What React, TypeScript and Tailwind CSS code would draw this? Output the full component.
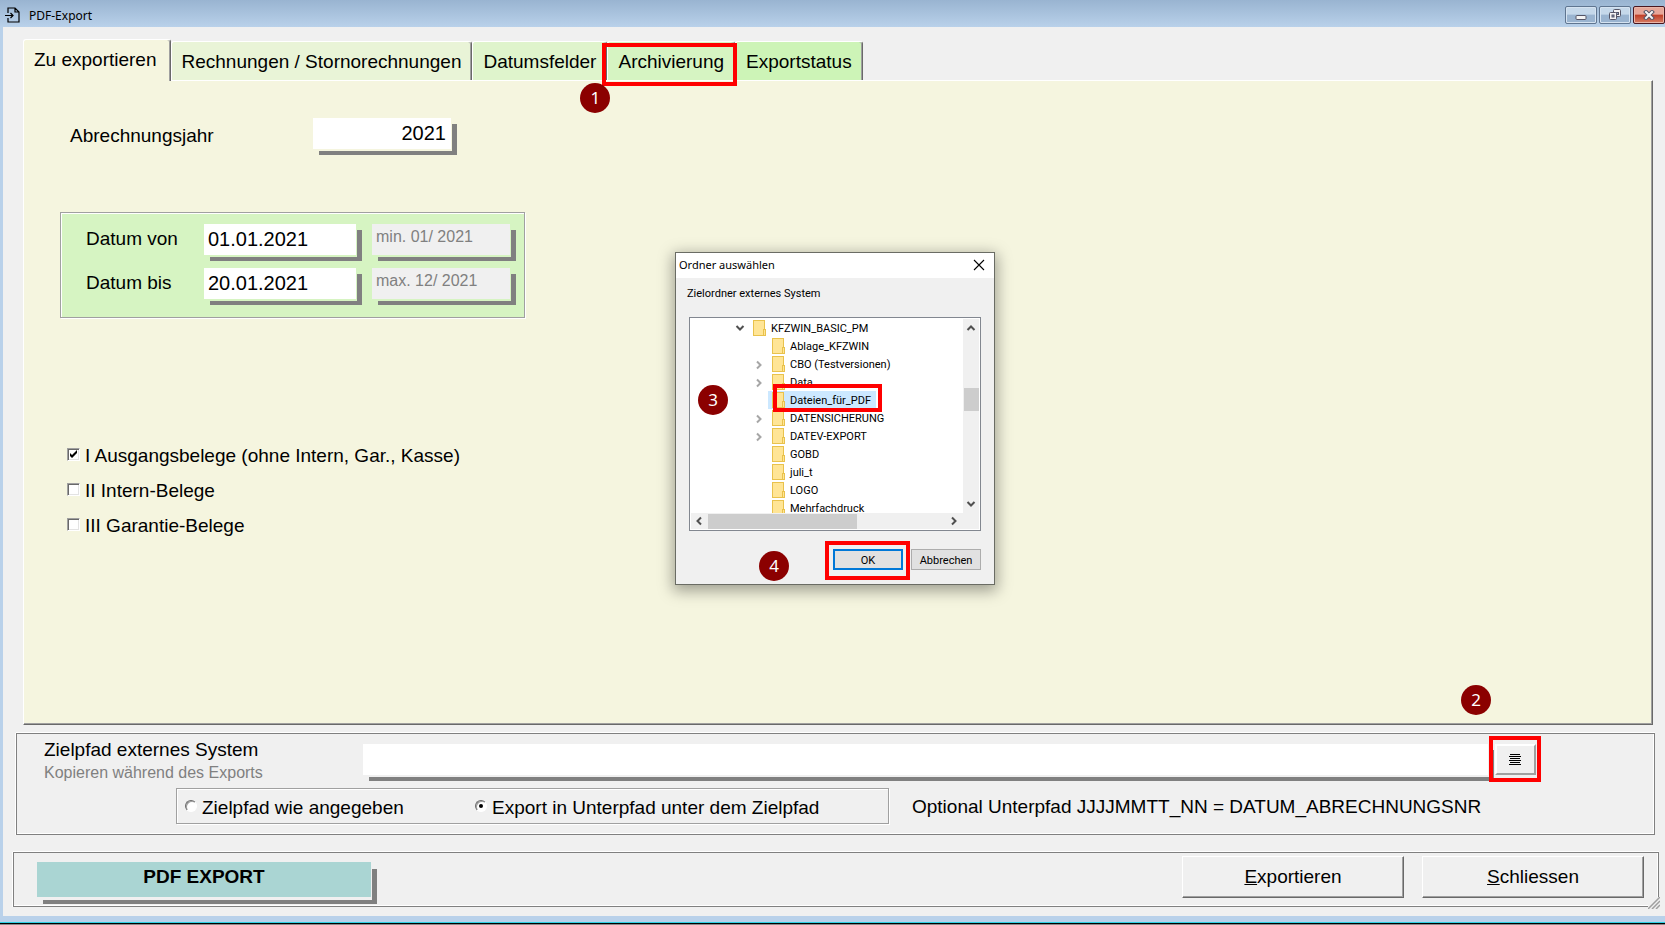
import React, { useState } from 'react';

type Tab = { name: string; color: string; marked?: boolean };

const tabs: Tab[] = [
  { name: 'Zu exportieren', color: 'bg-[#f5f5df]' },
  { name: 'Rechnungen / Stornorechnungen', color: 'bg-[#e9f4d7]' },
  { name: 'Datumsfelder', color: 'bg-[#dff4cc]' },
  { name: 'Archivierung', color: 'bg-[#d6f4c2]', marked: true },
  { name: 'Exportstatus', color: 'bg-[#cdf4b7]' },
];

const folders = [
  { name: 'Ablage_KFZWIN' },
  { name: 'CBO (Testversionen)', expandable: true },
  { name: 'Data', expandable: true },
  { name: 'Dateien_für_PDF' },
  { name: 'DATENSICHERUNG', expandable: true },
  { name: 'DATEV-EXPORT', expandable: true },
  { name: 'GOBD' },
  { name: 'juli_t' },
  { name: 'LOGO' },
  { name: 'Mehrfachdruck' },
];

const Badge: React.FC<{ n: number; className: string }> = ({ n, className }) => (
  <span
    className={`absolute z-20 flex size-[30px] items-center justify-center rounded-full bg-[#8b0000] pb-[2px] font-['Noto_Sans',sans-serif] text-[17px] leading-none text-white ${className}`}
  >
    {n}
  </span>
);

const Marker: React.FC<{ className: string }> = ({ className }) => (
  <span className={`pointer-events-none absolute z-10 border-4 border-[#ff0000] ${className}`} />
);

const Chevron: React.FC<{ d: string; color?: string }> = ({ d, color = '#505050' }) => (
  <svg width="10" height="10" viewBox="0 0 10 10" fill="none" stroke={color} strokeWidth="2">
    <path d={d} />
  </svg>
);

const UP = 'M1.500 7L5 3.500 8.500 7';
const DOWN = 'M1.500 3L5 6.500 8.500 3';
const LEFT = 'M7 1.500L3.500 5 7 8.500';
const RIGHT = 'M3 1.500L6.500 5 3 8.500';

const Folder: React.FC = () => (
  <svg width="13" height="16" viewBox="0 0 13 16" className="shrink-0">
    <rect x="0.5" y="0.5" width="11" height="15" fill="#ffe596" stroke="#e9c24c" />
    <rect x="10.5" y="9.5" width="2" height="6" fill="#ffe596" stroke="#e9c24c" />
  </svg>
);

const WindowButtons: React.FC = () => (
  <div className="flex gap-[2px] self-start pt-[6px]">
    <button
      aria-label="Minimieren"
      className="flex h-[18px] w-8 items-center justify-center rounded-[2px] border border-[#5f7590] bg-linear-to-b from-[#c5d8ea] from-45% to-[#9ab4d0] to-50% shadow-[inset_0_0_0_1px_#d5e3f1]"
    >
      <svg width="12" height="12" viewBox="0 0 12 12">
        <rect x="1" y="6.5" width="10" height="4" rx="1" fill="#f4f4f4" stroke="#555566" />
      </svg>
    </button>
    <button
      aria-label="Wiederherstellen"
      className="flex h-[18px] w-8 items-center justify-center rounded-[2px] border border-[#5f7590] bg-linear-to-b from-[#c5d8ea] from-45% to-[#9ab4d0] to-50% shadow-[inset_0_0_0_1px_#d5e3f1]"
    >
      <svg width="14" height="14" viewBox="0 0 14 14" fill="#f4f4f4" stroke="#555566">
        <rect x="5.5" y="1.5" width="7" height="7" rx="1" />
        <rect x="8.5" y="4.5" width="2" height="2" fill="#8ba8c4" />
        <rect x="1.5" y="4.5" width="7" height="7" rx="1" />
        <rect x="4" y="7" width="2" height="2" fill="#8ba8c4" />
      </svg>
    </button>
    <button
      aria-label="Schließen"
      className="flex h-[18px] w-8 items-center justify-center rounded-[2px] border border-[#4a1620] bg-linear-to-b from-[#e6a699] from-45% via-[#bf3d26] via-50% to-[#d67c64] shadow-[inset_0_0_0_1px_#eab5a8]"
    >
      <svg width="12" height="10" viewBox="0 0 12 10" fill="none" strokeLinecap="square">
        <path d="M3 2l6 6M9 2L3 8" stroke="#555566" strokeWidth="4" />
        <path d="M3 2l6 6M9 2L3 8" stroke="#f6f6f6" strokeWidth="2" />
      </svg>
    </button>
  </div>
);

const CheckRow: React.FC<{ label: string; checked?: boolean }> = ({ label, checked }) => (
  <label className="flex items-center gap-[5px]">
    <span className="relative mb-[3px] flex size-[13px]">
      <input
        type="checkbox"
        defaultChecked={checked}
        className="peer size-[13px] appearance-none border border-t-[#a0a0a0] border-r-white border-b-white border-l-[#a0a0a0] bg-white shadow-[inset_1px_1px_0_#696969,inset_-1px_-1px_0_#e3e3e3]"
      />
      <svg viewBox="0 0 13 13" className="pointer-events-none absolute inset-0 hidden peer-checked:block">
        <path d="M3 5v3l2 2 5-5V2L5 7z" fill="#000" />
      </svg>
    </span>
    {label}
  </label>
);

const RadioRow: React.FC<{ label: string; checked?: boolean }> = ({ label, checked }) => (
  <label className="flex items-center gap-[5px]">
    <span className="relative mb-[3px] flex size-3">
      <input
        type="radio"
        name="zielpfad"
        defaultChecked={checked}
        className="peer size-3 appearance-none rounded-full border border-t-[#696969] border-r-white border-b-white border-l-[#696969] bg-white shadow-[inset_1px_1px_0_#a0a0a0]"
      />
      <span className="pointer-events-none absolute top-1 left-1 hidden size-1 rounded-full bg-black peer-checked:block" />
    </span>
    {label}
  </label>
);

const DateRow: React.FC<{ id: string; label: string; value: string; limit: string }> = ({ id, label, value, limit }) => (
  <div className="flex items-center">
    <label htmlFor={id} className="w-[118px] pb-[2px]">
      {label}
    </label>
    <input
      id={id}
      defaultValue={value}
      className="mr-4 h-[31px] w-[152px] bg-white px-1 text-[20px] shadow-[1px_2px_0_#d6f4c2,6px_6px_0_#808080] outline-none"
    />
    <input
      aria-label={`${label} Grenze`}
      defaultValue={limit}
      disabled
      className="h-[31px] w-[138px] bg-[#f0f0f0] px-1 pb-[5px] text-[16px] text-[#808080] shadow-[1px_2px_0_#d6f4c2,6px_6px_0_#808080]"
    />
  </div>
);

const FolderDialog: React.FC = () => {
  const [selected, setSelected] = useState('Dateien_für_PDF');

  return (
    <div
      role="dialog"
      aria-label="Ordner auswählen"
      className="absolute top-[252px] left-[675px] w-80 border border-[#6a6c64] bg-[#f0f0f0] font-[Roboto,sans-serif] text-[11px] shadow-[0_4px_14px_2px_rgba(0,0,0,0.35)]"
    >
      <div className="flex h-[25px] items-center justify-between bg-white pr-[9px] pl-[3px]">
        <span className="pb-[2px] font-['Noto_Sans',sans-serif]">Ordner auswählen</span>
        <button aria-label="Dialog schließen" className="pb-[2px]">
          <svg width="12" height="12" viewBox="0 0 12 12" stroke="#000" strokeWidth="1.1">
            <path d="M1 1l10 10M11 1L1 11" />
          </svg>
        </button>
      </div>
      <p className="pt-2 pl-[11px] leading-4">Zielordner externes System</p>

      {/* Folder tree with its scroll bars */}
      <div className="mx-[13px] mt-[15px] grid h-[214px] grid-cols-[1fr_16px] grid-rows-[1fr_16px] border border-[#828790] bg-white p-px">
        <ul className="min-h-0 overflow-hidden leading-4">
          <li className="flex h-[18px] items-center">
            <span className="mr-2 ml-[44px]">
              <Chevron d={DOWN} />
            </span>
            <Folder />
            <span className="ml-[5px] pt-[2px]">KFZWIN_BASIC_PM</span>
          </li>
          {folders.map((folder) => (
            <li key={folder.name} className="flex h-[18px] items-center">
              <span className="ml-[63px] w-[14px] pt-[2px]">
                {folder.expandable && <Chevron d={RIGHT} color="#a6a6a6" />}
              </span>
              <button
                onClick={() => setSelected(folder.name)}
                className={`relative flex h-[18px] items-center pr-[5px] pl-1 ${folder.name === selected ? 'bg-[#cce8ff]' : ''}`}
              >
                <Folder />
                <span className="ml-[5px] pt-[2px]">{folder.name}</span>
                {folder.name === selected && <Marker className="-top-[7px] -right-[6px] -bottom-[3px] left-[5px]" />}
              </button>
            </li>
          ))}
        </ul>
        <div className="flex flex-col items-center justify-between bg-[#f0f0f0] py-1">
          <Chevron d={UP} />
          <span className="mb-[34px] h-[23px] w-[15px] bg-[#cdcdcd]" />
          <Chevron d={DOWN} />
        </div>
        <div className="flex items-center bg-[#f0f0f0] pr-1 pl-[3px]">
          <Chevron d={LEFT} />
          <span className="mr-auto ml-1 h-[15px] w-[149px] bg-[#cdcdcd]" />
          <Chevron d={RIGHT} />
        </div>
        <div className="bg-[#f0f0f0]" />
      </div>

      <div className="flex justify-end gap-2 px-[13px] pt-[18px] pb-[14px]">
        <div className="relative">
          <button className="block h-[21px] w-[70px] border-2 border-[#0078d7] bg-[#e1e1e1] pt-px leading-none">OK</button>
          <Marker className="-top-2 -right-[7px] -bottom-[10px] -left-2" />
          <Badge n={4} className="top-[2px] right-[114px]" />
        </div>
        <button className="h-[21px] w-[70px] border border-[#adadad] bg-[#e1e1e1] pt-px leading-none">Abbrechen</button>
      </div>
      <Badge n={3} className="top-[132px] left-[22px]" />
    </div>
  );
};

const App: React.FC = () => {
  const [active, setActive] = useState('Zu exportieren');

  return (
    <div className="relative flex min-h-screen flex-col bg-[#f0f0f0] font-['Liberation_Sans',Arial,sans-serif] text-[19px] leading-6 text-black">
      {/* Title bar */}
      <header className="flex h-[27px] items-center bg-linear-to-b from-[#99b4d1] to-[#b9d1ea] pl-[5px] font-['Noto_Sans',sans-serif] text-[12px]">
        <svg width="16" height="16" viewBox="0 0 16 16" fill="none" stroke="#000" strokeWidth="1.2" className="mt-[3px] mr-2">
          <path d="M3 6V1h7l4 4v10H3v-4M10 1v4h4M0 8.500h8M5.500 6L8 8.500 5.500 11" />
        </svg>
        <h1 className="mr-auto pt-1">PDF-Export</h1>
        <WindowButtons />
      </header>

      <main className="flex flex-1 flex-col border-l-[3px] border-[#b9d1ea] pt-3">
        {/* Tabs */}
        <div role="tablist" className="ml-5 flex h-[41px] items-end">
          {tabs.map((tab) => (
            <div key={tab.name} className="relative">
              <button
                role="tab"
                aria-selected={tab.name === active}
                onClick={() => setActive(tab.name)}
                className={`relative block rounded-t-[3px] border-t border-r border-l border-t-white border-r-[#696969] border-l-white pl-[10px] shadow-[inset_-1px_0_0_#a0a0a0] ${tab.color} ${tab.name === active ? 'z-10 -mb-px h-[42px] pr-[13px] pb-[2px]' : 'h-[39px] pt-[2px] pr-[10px]'}`}
              >
                {tab.name}
              </button>
              {tab.marked && (
                <>
                  <Marker className="top-[2px] -right-[2px] -bottom-[6px] -left-[5px]" />
                  <Badge n={1} className="top-[42px] -left-[27px]" />
                </>
              )}
            </div>
          ))}
        </div>

        <section className="mr-3 ml-5 flex-1 border-t border-r border-b border-l border-t-white border-r-[#696969] border-b-[#696969] border-l-white bg-[#f5f5df] pb-10 shadow-[inset_-1px_-1px_0_#a0a0a0]">
          <div className="flex items-center pt-[37px] pl-[46px]">
            <label htmlFor="jahr" className="w-[243px] pt-1">
              Abrechnungsjahr
            </label>
            <input
              id="jahr"
              defaultValue="2021"
              className="h-[31px] w-[138px] bg-white px-[5px] text-right text-[20px] shadow-[1px_2px_0_#f5f5df,6px_6px_0_#808080] outline-none"
            />
          </div>

          <div className="mt-[63px] ml-9 flex h-[106px] w-[465px] flex-col gap-[13px] border border-[#a0a0a0] bg-[#d6f4c2] pt-[11px] pl-[25px] shadow-[inset_1px_1px_0_#fff,1px_1px_0_#fff]">
            <DateRow id="von" label="Datum von" value="01.01.2021" limit="min. 01/ 2021" />
            <DateRow id="bis" label="Datum bis" value="20.01.2021" limit="max. 12/ 2021" />
          </div>

          <div className="mt-[126px] ml-[43px] flex flex-col items-start gap-[11px]">
            <CheckRow label="I Ausgangsbelege (ohne Intern, Gar., Kasse)" checked />
            <CheckRow label="II Intern-Belege" />
            <CheckRow label="III Garantie-Belege" />
          </div>
        </section>

        {/* Target path */}
        <section className="mt-2 mr-[10px] ml-[13px] h-[102px] border border-[#808080] pt-[10px] pl-[27px] shadow-[0_-1px_0_#fff,-1px_0_0_#fff,inset_-1px_-1px_0_#fff]">
          <div className="flex h-[42px]">
            <div className="w-[319px]">
              <label htmlFor="ziel" className="block leading-[11px]">
                Zielpfad externes System
              </label>
              <p className="mt-[10px] text-[16px] leading-4 text-[#808080]">Kopieren während des Exports</p>
            </div>
            <input
              id="ziel"
              className="h-[31px] flex-1 bg-white px-1 shadow-[1px_2px_0_#f0f0f0,6px_6px_0_#808080] outline-none"
            />
            <div className="relative mr-[118px] ml-[7px] h-[31px]">
              <button
                aria-label="Ordner wählen"
                className="flex h-[31px] w-[41px] items-center justify-center border-t-2 border-r-2 border-b-2 border-l-2 border-t-white border-r-[#a0a0a0] border-b-[#a0a0a0] border-l-white bg-[#f0f0f0] pr-px"
              >
                <svg width="12" height="12" viewBox="0 0 12 12" stroke="#000" shapeRendering="crispEdges">
                  <path d="M1 .5h10M0 2.500h12M1 4.500h10M0 6.500h12M1 8.500h10M0 10.500h12" />
                </svg>
              </button>
              <Marker className="-top-2 -right-[5px] -bottom-[7px] -left-[6px]" />
              <Badge n={2} className="-top-[59px] -left-[34px]" />
            </div>
          </div>
          <div className="mt-[2px] flex items-center">
            <fieldset className="ml-[132px] flex h-9 w-[713px] items-center border border-[#a0a0a0] pt-[3px] pl-2 shadow-[inset_1px_1px_0_#fff,1px_1px_0_#fff]">
              <div className="w-[290px]">
                <RadioRow label="Zielpfad wie angegeben" />
              </div>
              <RadioRow label="Export in Unterpfad unter dem Zielpfad" checked />
            </fieldset>
            <p className="ml-[23px] pt-[2px]">Optional Unterpfad JJJJMMTT_NN = DATUM_ABRECHNUNGSNR</p>
          </div>
        </section>

        {/* Actions */}
        <footer className="relative mt-[17px] mr-[6px] mb-[9px] ml-[10px] flex h-[55px] gap-[18px] border border-[#808080] pt-[3px] pr-[14px] pl-[23px] shadow-[0_-1px_0_#fff,-1px_0_0_#fff,inset_-1px_-1px_0_#fff]">
          <h2 className="mt-[6px] mr-auto h-[35px] w-[334px] bg-[#aad5d3] pt-[3px] text-center font-bold shadow-[1px_3px_0_#f0f0f0,6px_7px_0_#808080]">
            PDF EXPORT
          </h2>
          <button className="h-[42px] w-[222px] border border-t-white border-r-[#696969] border-b-[#696969] border-l-white shadow-[inset_-1px_-1px_0_#a0a0a0]">
            <u>E</u>xportieren
          </button>
          <button className="h-[42px] w-[222px] border border-t-white border-r-[#696969] border-b-[#696969] border-l-white shadow-[inset_-1px_-1px_0_#a0a0a0]">
            <u>S</u>chliessen
          </button>
          <svg width="12" height="12" viewBox="0 0 12 12" stroke="#a0a0a0" strokeWidth="1.5" className="absolute -right-[2px] -bottom-[3px] bg-[#f0f0f0]">
            <path d="M0 12L12 0M4 12l8-8M8 12l4-4" />
          </svg>
        </footer>
      </main>
      <div className="h-[9px] border-b border-[#8a8a8a] bg-[#b9d1ea] shadow-[inset_0_-1px_0_#000,inset_0_-2px_0_#2cd0e4]" />

      <FolderDialog />
    </div>
  );
};

export default App;
